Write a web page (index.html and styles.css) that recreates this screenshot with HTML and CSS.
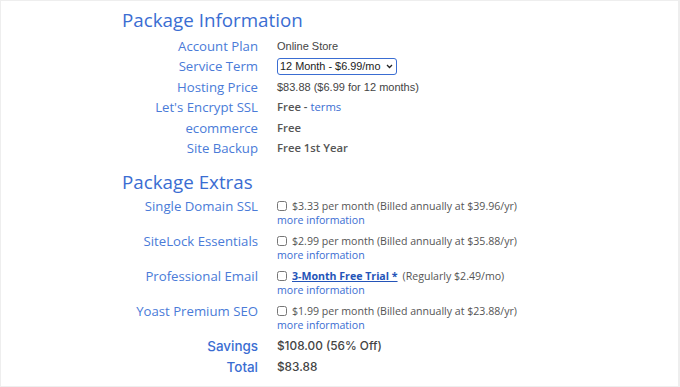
FILE: index.html
```html
<!DOCTYPE html>
<html lang="en">
<head>
  <meta charset="UTF-8">
  <title>Package Information</title>
  <meta name="viewport" content="width=device-width, initial-scale=1.0">
  <link rel="stylesheet" href="styles.css">
</head>
<body>
  <div class="frame">
    <h2>Package Information</h2>
    <div class="rows">
      <div class="label">Account Plan</div>
      <div class="value">Online Store</div>

      <div class="label">Service Term</div>
      <div class="value">
        <select class="term">
          <option>12 Month - $6.99/mo</option>
        </select>
      </div>

      <div class="label">Hosting Price</div>
      <div class="value">$83.88 ($6.99 for 12 months)</div>

      <div class="label">Let's Encrypt SSL</div>
      <div class="value bold">Free - <a href="#" class="terms">terms</a></div>

      <div class="label">ecommerce</div>
      <div class="value bold">Free</div>

      <div class="label">Site Backup</div>
      <div class="value bold">Free 1st Year</div>
    </div>

    <h2 class="extras-title">Package Extras</h2>
    <div class="rows extras">
      <div class="label">Single Domain SSL</div>
      <div class="value">
        <label class="opt"><input type="checkbox"> $3.33 per month (Billed annually at $39.96/yr)</label>
        <a href="#" class="more">more information</a>
      </div>

      <div class="label">SiteLock Essentials</div>
      <div class="value">
        <label class="opt"><input type="checkbox"> $2.99 per month (Billed annually at $35.88/yr)</label>
        <a href="#" class="more">more information</a>
      </div>

      <div class="label">Professional Email</div>
      <div class="value">
        <label class="opt"><input type="checkbox"> <a href="#" class="trial">3-Month Free Trial *</a> (Regularly $2.49/mo)</label>
        <a href="#" class="more">more information</a>
      </div>

      <div class="label">Yoast Premium SEO</div>
      <div class="value">
        <label class="opt"><input type="checkbox"> $1.99 per month (Billed annually at $23.88/yr)</label>
        <a href="#" class="more">more information</a>
      </div>
    </div>

    <div class="rows totals">
      <div class="label">Savings</div>
      <div class="value">$108.00 (56% Off)</div>

      <div class="label">Total</div>
      <div class="value">$83.88</div>
    </div>
  </div>
</body>
</html>
```

FILE: styles.css
```css
body { margin: 0; background: #fff; font-family: "Open Sans", Arial, sans-serif; }
.frame { box-sizing: border-box; width: 680px; height: 387px; border: 1px solid #eee; border-right-width: 2px; padding: 6px 0 0 121px; }
h2 { margin: 0 0 3px; font-size: 18.8px; font-weight: 400; color: #3a6dd2; line-height: 26px; }
.extras-title { margin-top: 11px; margin-bottom: 1px; }
.rows { display: grid; grid-template-columns: 136px 1fr; column-gap: 19px; align-items: start; }
.label { text-align: right; font-size: 13.2px; line-height: 20.4px; color: #4a7bd8; white-space: nowrap; }
.value { font-family: "Liberation Sans", Arial, sans-serif; font-size: 11px; line-height: 20.4px; color: #444; }
.value.bold { font-family: "Open Sans", Arial, sans-serif; font-weight: 600; font-size: 11.3px; color: #555; }
.terms { color: #3a6dd2; text-decoration: none; font-weight: 400; }
.term {
  appearance: none; -webkit-appearance: none;
  font-family: "Liberation Sans", Arial, sans-serif; font-size: 10.9px; color: #222;
  width: 120px; height: 17px; padding: 0 10px 0 2px; margin-top: 1px;
  border: 1px solid #3a6dd2; border-radius: 3px;
  background: #fff url("data:image/svg+xml,%3Csvg xmlns='http://www.w3.org/2000/svg' width='7' height='5' viewBox='0 0 7 5'%3E%3Cpath d='M1 1l2.5 2.5L6 1' fill='none' stroke='%23222' stroke-width='1.3'/%3E%3C/svg%3E") no-repeat right 3px center;
}
.extras .label { height: 35px; }
.extras .value { font-family: "Open Sans", Arial, sans-serif; font-size: 10.6px; line-height: 14px; padding-top: 3px; }
.opt { display: flex; align-items: center; gap: 5px; color: #555; white-space: nowrap; }
.opt input { margin: 0; width: 10px; height: 10px; }
.trial { font-weight: 700; color: #2454b8; text-decoration: underline; }
.more { display: block; color: #3a6dd2; text-decoration: none; }
.totals .label, .totals .value { font-family: Inter, "Open Sans", sans-serif; font-weight: 500; line-height: 21px; }
.totals .label { font-size: 13.4px; color: #3a6dd2; }
.totals .value { font-size: 11.8px; color: #444; }
```
